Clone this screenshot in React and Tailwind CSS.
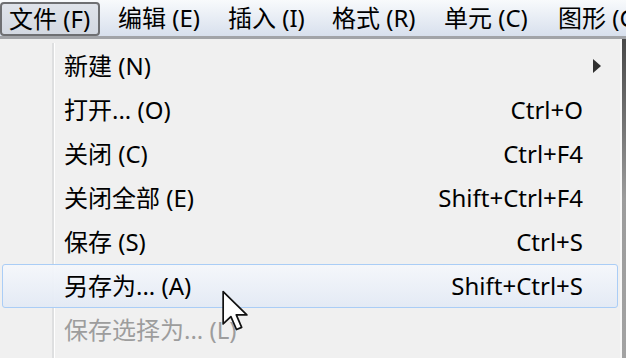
import React from "react";

const items = [
  { label: "新建 (N)", shortcut: "", arrow: true },
  { label: "打开... (O)", shortcut: "Ctrl+O" },
  { label: "关闭 (C)", shortcut: "Ctrl+F4" },
  { label: "关闭全部 (E)", shortcut: "Shift+Ctrl+F4" },
  { label: "保存 (S)", shortcut: "Ctrl+S" },
  { label: "另存为... (A)", shortcut: "Shift+Ctrl+S", active: true },
  { label: "保存选择为... (L)", shortcut: "", disabled: true },
];

function Row({ item }) {
  const base =
    "h-[44px] mx-[2px] flex items-center pl-[61px] pr-[16px] rounded-[3px] border";
  const state = item.active
    ? " border-[#aacdf6] bg-gradient-to-b from-[#f5f7fb]/95 to-[#e3eaf5]/95"
    : " border-transparent";
  const color = item.disabled ? " text-[#9d9d9d]" : " text-[#000]";
  return (
    <div className={base + state + color}>
      <span className="whitespace-nowrap">{item.label}</span>
      <span className="flex-1" />
      <span className="whitespace-nowrap">{item.shortcut}</span>
      <span className="w-[8px] ml-[10px] flex items-center">
        {item.arrow ? (
          <svg width="8" height="14" viewBox="0 0 8 14">
            <polygon points="0,0 8,7 0,14" fill="#2f2f2f" />
          </svg>
        ) : null}
      </span>
    </div>
  );
}

export default function App() {
  return (
    <div
      className="w-[626px] h-[358px] overflow-hidden bg-[#f0f0f0] relative text-[24px] leading-none"
      style={{ fontFamily: '"Noto Sans", "Noto Sans CJK SC", sans-serif' }}
    >
      <div className="h-[39px] flex overflow-hidden bg-gradient-to-b from-[#f8fafc] to-[#d8e0ed] border-b-[3px] border-[#a2a4a8]">
        <div className="w-[100px] shrink-0 mr-[10px] mt-[2px] h-[34px] flex items-center pl-[7px] border-2 border-[#6e6f72] rounded-[4px] bg-gradient-to-b from-[#dfe3ea] to-[#d3d8e1] text-black whitespace-nowrap">
          文件 (F)
        </div>
        <div className="w-[110px] shrink-0 flex items-center pl-[8px] text-black whitespace-nowrap">编辑 (E)</div>
        <div className="w-[104px] shrink-0 flex items-center pl-[8px] text-black whitespace-nowrap">插入 (I)</div>
        <div className="w-[112px] shrink-0 flex items-center pl-[8px] text-black whitespace-nowrap">格式 (R)</div>
        <div className="w-[114px] shrink-0 flex items-center pl-[8px] text-black whitespace-nowrap">单元 (C)</div>
        <div className="shrink-0 flex items-center pl-[8px] text-black whitespace-nowrap">图形 (G)</div>
      </div>
      <div className="flex h-[319px]">
        <div className="w-[622px] shrink-0 pt-[5px] border-r-2 border-[#f7f7f7] bg-[linear-gradient(to_right,transparent_52px,#dedfe0_52px,#dedfe0_54px,#ffffff_54px,#ffffff_55px,transparent_55px)] bg-no-repeat bg-[position:0_4px]">
          {items.map((it) => (
            <Row key={it.label} item={it} />
          ))}
        </div>
        <div className="flex-1 bg-gradient-to-b from-[#4a4a4a] via-[#9c9c9c] to-[#a3a3a3]" />
      </div>
      <svg
        className="absolute left-[221px] top-[289px]"
        width="28"
        height="44"
        viewBox="0 0 13 20"
      >
        <polygon
          points="1,1 1,16 4.6,12.6 7.2,18.6 9.6,17.6 7.1,11.8 12,11.8"
          fill="#ffffff"
          stroke="#111111"
          strokeWidth="0.8"
          strokeLinejoin="round"
        />
      </svg>
    </div>
  );
}
